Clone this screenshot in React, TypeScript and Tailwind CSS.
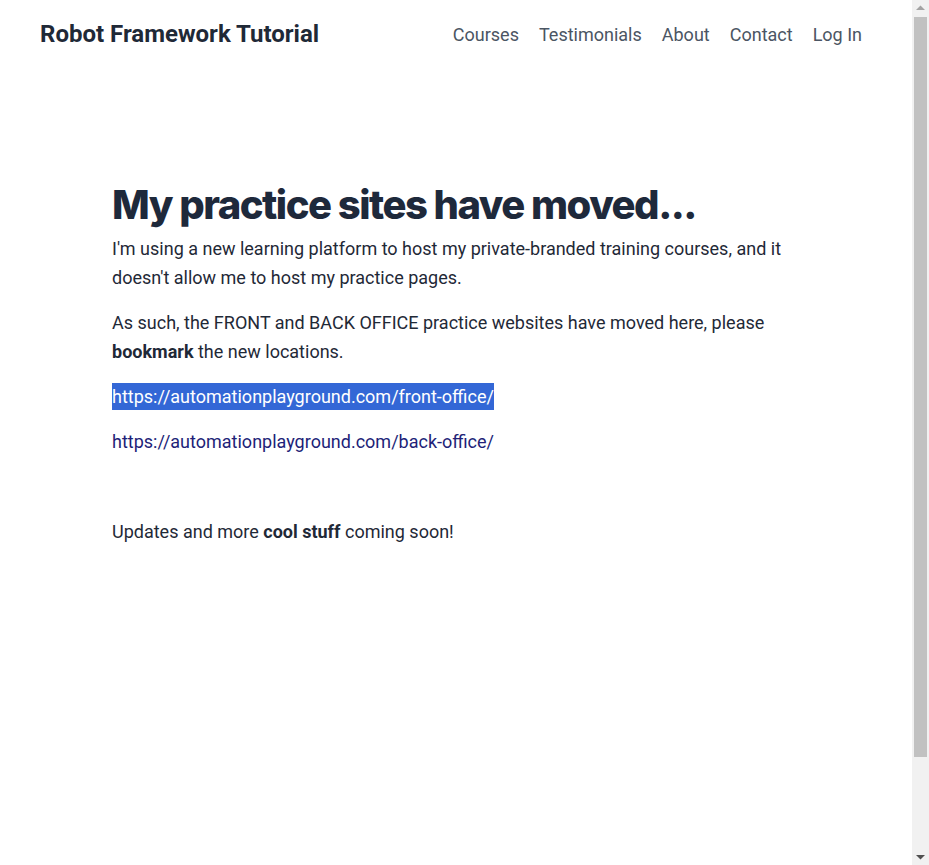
export default function App() {
  const navItems = ["Courses", "Testimonials", "About", "Contact", "Log In"];

  return (
    <div className="flex min-h-screen bg-white font-['Roboto',sans-serif] text-[#1f2937]">
      <div className="w-[912px] shrink-0">
        <header className="flex h-[68px] items-center justify-between px-10">
          <a className="text-[24px] font-bold text-[#1f2937]" href="#">
            Robot Framework Tutorial
          </a>
          <nav className="flex items-center">
            {navItems.map((item) => (
              <a key={item} href="#" className="px-[10px] text-[18px] text-[#4b5563]">
                {item}
              </a>
            ))}
          </nav>
        </header>

        <main className="mx-auto w-[688px] pt-[113px] text-[18px] leading-[29px]">
          <h1 className="mb-[5px] font-['Inter',sans-serif] text-[40px] leading-[48px] font-extrabold tracking-[-1.5px] text-[#1e293b]">
            My practice sites have moved...
          </h1>
          <p className="mb-4">
            I'm using a new learning platform to host my private-branded training courses, and it
            doesn't allow me to host my practice pages.
          </p>
          <p className="mb-4">
            As such, the FRONT and BACK OFFICE practice websites have moved here, please{" "}
            <strong>bookmark</strong> the new locations.
          </p>
          <p className="mb-4">
            <a href="#" className="bg-[#3367d6] py-[3px] text-white">
              https://automationplayground.com/front-office/
            </a>
          </p>
          <p className="mb-4">
            <a href="#" className="text-[#221f78]">
              https://automationplayground.com/back-office/
            </a>
          </p>
          <p className="mb-4">&nbsp;</p>
          <p className="mb-4">
            Updates and more <strong>cool stuff</strong> coming soon!
          </p>
        </main>
      </div>

      {/* browser scrollbar */}
      <div className="fixed top-0 right-0 h-full w-[17px] bg-[#f1f1f1]">
        <svg className="absolute top-[5px] left-[4px]" width="9" height="6" viewBox="0 0 9 6">
          <path d="M0 5 L4.5 0.5 L9 5 Z" fill="#a3a3a3" />
        </svg>
        <div className="absolute top-[17px] left-[2px] h-[740px] w-[13px] bg-[#c1c1c1]" />
        <svg className="absolute bottom-[5px] left-[4px]" width="9" height="6" viewBox="0 0 9 6">
          <path d="M0 1 L4.5 5.5 L9 1 Z" fill="#505050" />
        </svg>
      </div>
    </div>
  );
}
